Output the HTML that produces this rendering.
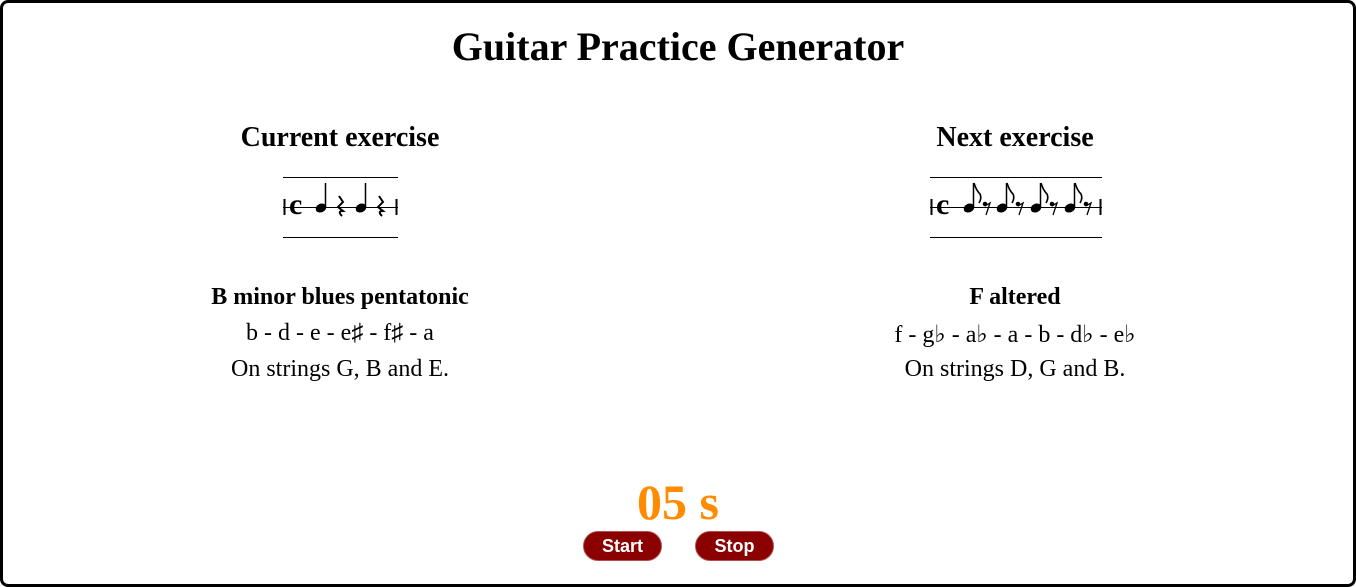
<!DOCTYPE html>
<html><head><meta charset="utf-8"><style>
html,body{margin:0;padding:0;width:1356px;height:587px;overflow:hidden;background:#fff}
.frame{position:absolute;left:0;top:0;width:1350px;height:581px;border:3px solid #000;border-radius:8px}
.t{position:absolute;font-family:"Liberation Serif",serif;color:#000;text-align:center;white-space:nowrap}
.btn{position:absolute;top:531px;width:77px;height:28px;background:#8b0000;border:1px solid #b05050;border-radius:15px;color:#fff;font:bold 18px "Liberation Sans",sans-serif;text-align:center;line-height:28px;box-sizing:content-box}
</style></head><body>
<div class="frame"></div>
<div class="t" style="left:0;width:1356px;top:23px;font-size:40px;font-weight:bold">Guitar Practice Generator</div>
<div class="t" style="left:140px;width:400px;top:122px;font-size:28px;font-weight:bold">Current exercise</div>
<div class="t" style="left:815px;width:400px;top:122px;font-size:28px;font-weight:bold">Next exercise</div>

<svg style="position:absolute;left:0;top:0" width="1356" height="587">
<g stroke="#000" fill="none">
<line x1="283" y1="177.5" x2="398" y2="177.5"/>
<line x1="283" y1="237.5" x2="398" y2="237.5"/>
<line x1="283" y1="207.5" x2="398" y2="207.5"/>
<line x1="284.5" y1="199" x2="284.5" y2="215" stroke-width="2"/>
<line x1="396.5" y1="199" x2="396.5" y2="215" stroke-width="2"/>
<line x1="930" y1="177.5" x2="1102" y2="177.5"/>
<line x1="930" y1="237.5" x2="1102" y2="237.5"/>
<line x1="930" y1="207.5" x2="1102" y2="207.5"/>
<line x1="931.5" y1="199" x2="931.5" y2="215" stroke-width="2"/>
<line x1="1100.5" y1="199" x2="1100.5" y2="215" stroke-width="2"/>
</g>
<text x="289" y="214" font-family="Liberation Serif" font-size="30" font-weight="bold">c</text>
<text x="936" y="214" font-family="Liberation Serif" font-size="30" font-weight="bold">c</text>
<g fill="#000" stroke="#000">
<ellipse cx="321" cy="208" rx="5" ry="3.8" transform="rotate(-25 321 208)"/>
<line x1="325.5" y1="207" x2="325.5" y2="183" stroke-width="1.5"/>
<ellipse cx="361" cy="208" rx="5" ry="3.8" transform="rotate(-25 361 208)"/>
<line x1="365.5" y1="207" x2="365.5" y2="183" stroke-width="1.5"/>
<path d="M339 196 L343 202 L338 207 L343 211 Q337 211 342 216" fill="none" stroke-width="2"/>
<path d="M379 196 L383 202 L378 207 L383 211 Q377 211 382 216" fill="none" stroke-width="2"/>
</g>
<g fill="#000" stroke="#000">
<g id="e1">
<ellipse cx="969" cy="208" rx="5" ry="3.8" transform="rotate(-25 969 208)"/>
<line x1="973.5" y1="207" x2="973.5" y2="183" stroke-width="1.5"/>
<path d="M974 183 Q976 190 980 194 Q982 198 979 203" fill="none" stroke-width="1.6"/>
<circle cx="985" cy="204" r="1.8"/>
<path d="M985 206 L990 203 L986 215" fill="none" stroke-width="1.3"/>
</g>
<use href="#e1" x="33"/>
<use href="#e1" x="67"/>
<use href="#e1" x="101"/>
</g>
</svg>

<div class="t" style="left:140px;width:400px;top:284px;font-size:24px;font-weight:bold">B minor blues pentatonic</div>
<div class="t" style="left:140px;width:400px;top:320px;font-size:24px">b - d - e - e♯ - f♯ - a</div>
<div class="t" style="left:140px;width:400px;top:356px;font-size:24px">On strings G, B and E.</div>
<div class="t" style="left:815px;width:400px;top:284px;font-size:24px;font-weight:bold">F altered</div>
<div class="t" style="left:815px;width:400px;top:320px;font-size:24px">f - g♭ - a♭ - a - b - d♭ - e♭</div>
<div class="t" style="left:815px;width:400px;top:356px;font-size:24px">On strings D, G and B.</div>

<div class="t" style="left:0;width:1356px;top:473px;font-size:50px;font-weight:bold;color:#ff8c00">05 s</div>
<div class="btn" style="left:583px">Start</div>
<div class="btn" style="left:695px">Stop</div>
</body></html>
